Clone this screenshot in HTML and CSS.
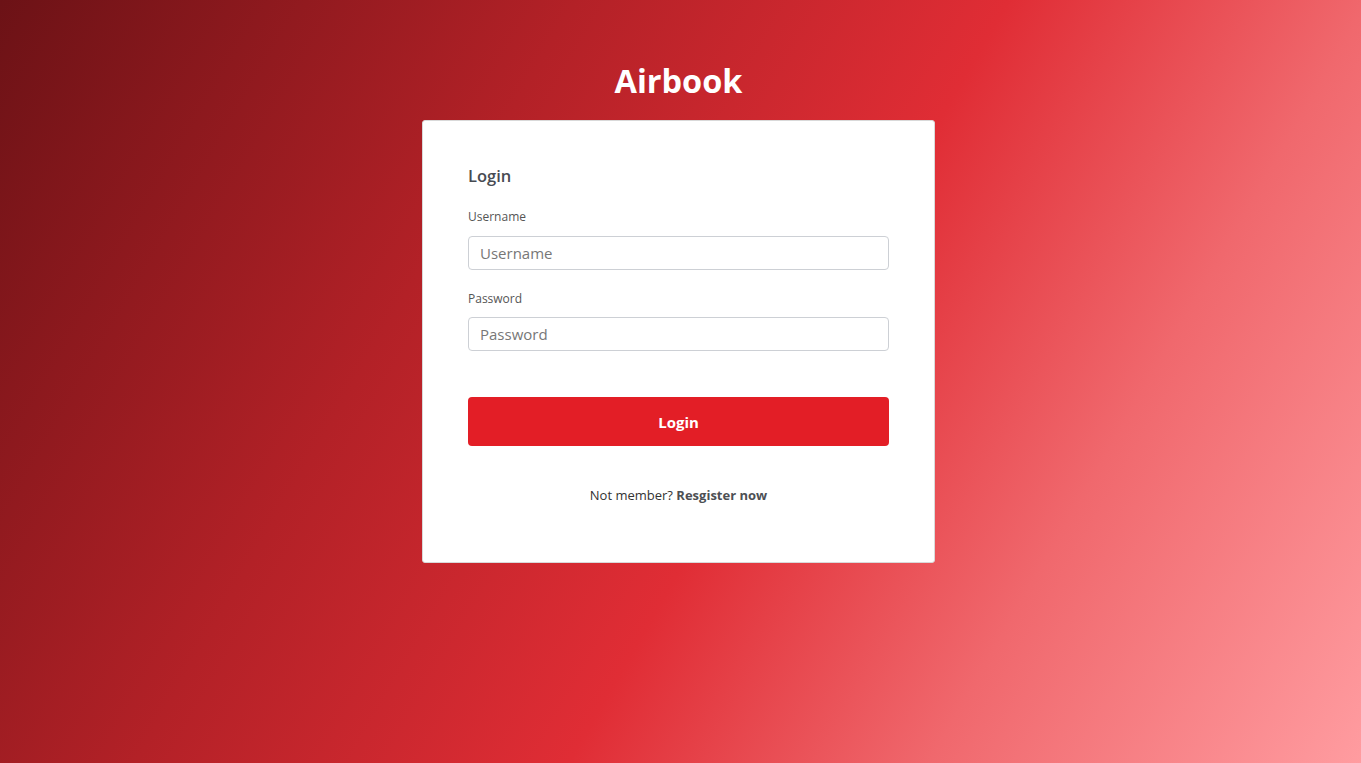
FILE: index.html
```
<!DOCTYPE html>
<html lang="en">
<head>
<meta charset="utf-8">
<title>Airbook - Login</title>
<link rel="stylesheet" href="styles.css">
</head>
<body>
<main class="page">
  <h1 class="brand">Airbook</h1>
  <form class="card">
    <h2 class="card-title">Login</h2>
    <label class="field-label" for="username">Username</label>
    <input class="field-input" id="username" type="text" placeholder="Username">
    <label class="field-label field-label-2" for="password">Password</label>
    <input class="field-input" id="password" type="password" placeholder="Password">
    <button class="btn-login" type="button">Login</button>
    <p class="footer-text">Not member? <a class="footer-link" href="#">Resgister now</a></p>
  </form>
</main>
</body>
</html>
```
FILE: styles.css
```
html, body {
  margin: 0;
  padding: 0;
  height: 100%;
}
body {
  font-family: "Open Sans", "DejaVu Sans", sans-serif;
  background: linear-gradient(120deg, #6c1216 0%, #b32127 32%, #e02d35 56%, #f0686d 76%, #ff9ca0 100%);
  min-height: 763px;
  overflow: hidden;
}
.page {
  display: flex;
  flex-direction: column;
  align-items: center;
  padding-top: 61px;
  padding-right: 4px;
}
.brand {
  margin: 0 0 19px;
  font-size: 32.5px;
  line-height: 40px;
  font-weight: 700;
  color: #fff;
  letter-spacing: 0;
}
.card {
  box-sizing: border-box;
  width: 513px;
  background: #fff;
  border: 1px solid #d9d9d9;
  border-radius: 3px;
  padding: 43px 45px 57px;
  display: flex;
  flex-direction: column;
}
.card-title {
  margin: 0;
  font-size: 16.5px;
  line-height: 24px;
  font-weight: 600;
  color: #474b52;
}
.field-label {
  margin-top: 21px;
  font-size: 12px;
  line-height: 16px;
  color: #555;
}
.field-label-2 {
  margin-top: 21px;
}
.field-input {
  box-sizing: border-box;
  margin-top: 11px;
  width: 421px;
  height: 34px;
  border: 1px solid #cdd0d5;
  border-radius: 4px;
  padding: 0 11px;
  font-family: inherit;
  font-size: 15px;
  color: #333;
  outline: none;
}
.field-input::placeholder {
  color: #777;
}
.field-label-2 + .field-input {
  margin-top: 10px;
}
.btn-login {
  margin-top: 46px;
  width: 421px;
  height: 49px;
  border: none;
  border-radius: 4px;
  background: #e31e26;
  color: #fff;
  font-family: inherit;
  font-size: 15px;
  font-weight: 700;
  cursor: pointer;
}
.footer-text {
  margin: 39px 0 0;
  text-align: center;
  font-size: 13px;
  line-height: 20px;
  color: #333;
}
.footer-link {
  color: #4d4f54;
  font-weight: 700;
  text-decoration: none;
}
```
